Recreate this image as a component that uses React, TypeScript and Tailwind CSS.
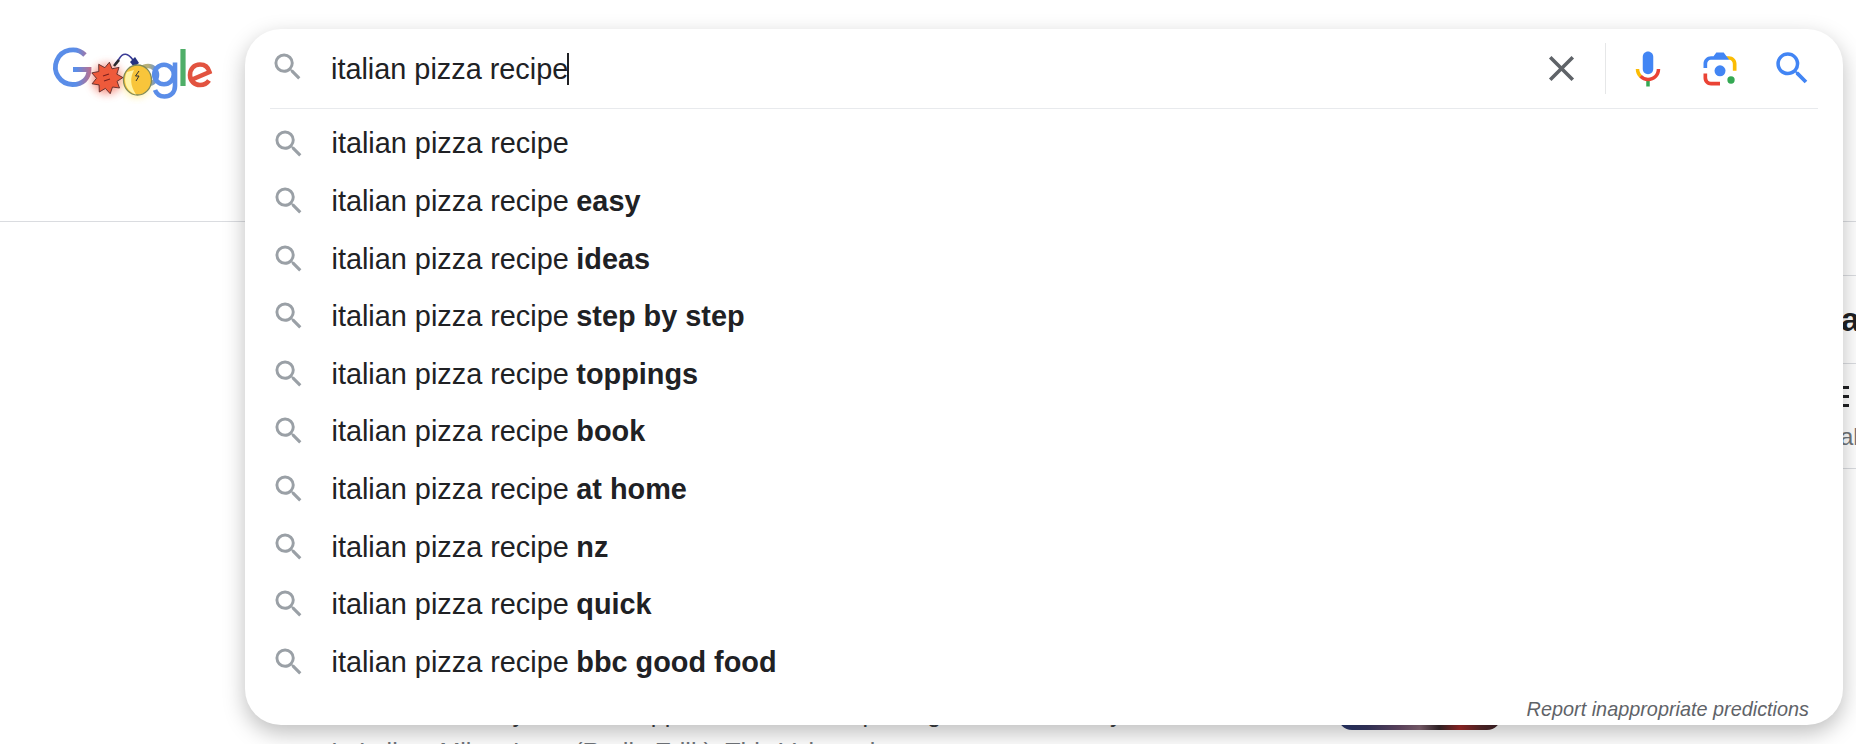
const SEARCH = "M15.5 14h-.79l-.28-.27A6.471 6.471 0 0 0 16 9.5 6.5 6.5 0 1 0 9.5 16c1.61 0 3.09-.59 4.23-1.57l.27.28v.79l5 4.99L20.49 19l-4.99-5zm-6 0C7.01 14 5 11.99 5 9.5S7.01 5 9.5 5 14 7.01 14 9.5 11.99 14 9.5 14z";

const suggestions = ["", "easy", "ideas", "step by step", "toppings", "book", "at home", "nz", "quick", "bbc good food"];

function starPoints(cx: number, cy: number, outer: number, inner: number, n: number) {
  const pts: string[] = [];
  for (let i = 0; i < n * 2; i++) {
    const r = i % 2 === 0 ? outer : inner;
    const a = (Math.PI * i) / n - Math.PI / 2 + 0.15;
    pts.push(`${(cx + r * Math.cos(a)).toFixed(1)},${(cy + r * Math.sin(a)).toFixed(1)}`);
  }
  return pts.join(" ");
}

function Logo() {
  return (
    <svg width="176" height="64" viewBox="44 40 176 64" className="block">
      <defs>
        <filter id="soft" x="-10%" y="-10%" width="120%" height="120%">
          <feGaussianBlur stdDeviation="0.7" />
        </filter>
        <filter id="glow" x="-60%" y="-60%" width="220%" height="220%">
          <feGaussianBlur stdDeviation="4" />
        </filter>
        <linearGradient id="gfade" gradientUnits="userSpaceOnUse" x1="76" y1="0" x2="94" y2="0">
          <stop offset="0" stopColor="#5a8de8" />
          <stop offset="1" stopColor="#d0687a" />
        </linearGradient>
        <linearGradient id="ofade" gradientUnits="userSpaceOnUse" x1="148" y1="0" x2="158" y2="0">
          <stop offset="0" stopColor="#b8b078" />
          <stop offset="1" stopColor="#5a8de8" />
        </linearGradient>
      </defs>
      <circle cx="107" cy="79" r="15" fill="#f26a55" opacity="0.7" filter="url(#glow)" />
      <circle cx="137" cy="84" r="12" fill="#ffe14d" opacity="0.7" filter="url(#glow)" />
      <g filter="url(#soft)" fill="none">
        <path d="M85 55 A17.3 17.3 0 1 0 72.5 84.5 C83 84.5 89 78 89 69.5 L73 69.5" stroke="url(#gfade)" strokeWidth="4.8" />
        <circle cx="148" cy="75" r="9" stroke="url(#ofade)" strokeWidth="4.5" />
        <circle cx="164" cy="74.5" r="9.8" stroke="#5a8de8" strokeWidth="4.6" />
        <path d="M175 62.5 V86 C175 93 170 96.5 164.5 96.5 C160 96.5 156.5 94 155 90" stroke="#5a8de8" strokeWidth="4.6" />
        <path d="M183 49 V86" stroke="#4fae68" strokeWidth="5.2" />
        <path d="M191 80 L209.5 72 C208 66.5 204 64.5 200 64.5 C194 64.5 190 69 190 75 C190 81 194.5 85 200 85 C204 85 207 83.5 209 80.5" stroke="#e2533f" strokeWidth="4.6" />
        <polygon points={starPoints(107, 78, 16, 10.5, 9)} fill="#ee5a3a" stroke="#5a2a2a" strokeWidth="0.9" />
        <path d="M103 76 l6 -2 M104 81 l6 -2" stroke="#7a1f1f" strokeWidth="1.1" />
        <path d="M115 64 L119 59 C123 52 128 53 133 60" stroke="#3a3b96" strokeWidth="1.6" />
        <path d="M114 66 L119 60" stroke="#2b2b2b" strokeWidth="2.6" />
        <path d="M130 62 L135 57 L139 63 L134 67 Z" fill="#25307f" />
        <ellipse cx="137.5" cy="80" rx="14" ry="15" fill="#f8c53a" stroke="#7f8a5a" strokeWidth="1.3" />
        <path d="M127 72 C123 79 125 91 136 94.5 C130 85 130 78 134 70 Z" fill="#fff3a6" />
        <path d="M139 71 l-3.5 5 l3.5 0 l-3 5" stroke="#333" strokeWidth="1" />
      </g>
    </svg>
  );
}

function Row({ bold }: { bold: string }) {
  return (
    <li className="flex h-[57.6px] items-center pl-[25.5px]">
      <svg width="35.6" height="35.6" viewBox="0 0 24 24" fill="#9aa0a6" className="shrink-0">
        <path d={SEARCH} />
      </svg>
      <span className="ml-[25.4px] pt-[1px] text-[28.85px] leading-none text-[#202124]">
        italian pizza recipe{bold ? " " : ""}
        {bold ? <b className="-ml-[0.5px] font-bold">{bold}</b> : null}
      </span>
    </li>
  );
}

export default function App() {
  return (
    <div className="relative h-[744px] w-full overflow-hidden bg-white font-['Liberation_Sans',Arial,sans-serif]">
      <header className="h-[222px] border-b border-[#dadce0] pl-[44px] pt-[40px]">
        <Logo />
      </header>

      <main className="flex h-[522px]">
        <div className="min-w-0 flex-1 pl-[331px] pt-[476px] text-[25px] leading-[30px]">
          <p className="flex whitespace-nowrap text-[#3c4043]">
            <span className="ml-[130px]">Every</span>
            <span className="ml-[112px]">appeared</span>
            <span className="ml-[99px]">top</span>
            <span className="ml-[5px]">using</span>
            <span className="ml-[141px]">day</span>
          </p>
          <p className="mt-[9px] whitespace-nowrap text-[#70757a]">In Italian: Milan, Luca (Radio Erlik). This Volume is</p>
        </div>
        <div className="mr-[255px] h-[508px] w-[163px] rounded-b-[14px] bg-[linear-gradient(90deg,#26386f_0%,#3a3a66_18%,#6d4f6e_38%,#8a6a7a_50%,#38282c_62%,#a32a2a_75%,#5a2a2c_88%,#3a2228_100%)]" />
        <aside className="w-[100px] shrink-0 text-[#202124]">
          <div className="h-[54px] border-b border-[#dadce0]" />
          <div className="flex h-[88px] items-center border-b border-[#dadce0] pl-[85px] text-[34px] font-bold leading-none">
            <span className="-mt-[2px]">a</span>
          </div>
          <div className="h-[105px] border-b border-[#dadce0] pl-[87px] pt-[22px]">
            <div className="h-[2.5px] w-[6px] bg-[#202124]" />
            <div className="mt-[6.5px] h-[2.5px] w-[6px] bg-[#202124]" />
            <div className="mt-[6.5px] h-[2.5px] w-[6px] bg-[#202124]" />
            <p className="mt-[18px] -ml-[3px] text-[24px] leading-none text-[#70757a]">al</p>
          </div>
        </aside>
      </main>

      <section className="absolute left-[245px] top-[29px] flex h-[696px] w-[1598px] flex-col rounded-[36px] bg-white shadow-[0_8px_22px_rgba(0,0,0,0.26)]">
        <div className="mx-[25px] flex h-[80px] shrink-0 items-center border-b-[1.5px] border-[#e8eaed]">
          <svg width="35.6" height="35.6" viewBox="0 0 24 24" fill="#9aa0a6" className="-mt-[4px] shrink-0">
            <path d={SEARCH} />
          </svg>
          <span className="ml-[25.4px] pt-[2px] text-[28.85px] leading-none text-[#202124]">italian pizza recipe</span>
          <span className="-ml-[1px] h-[32px] w-[1.3px] bg-[#202124]" />
          <div className="ml-auto flex items-center pr-[5px]">
            <svg width="43" height="43" viewBox="0 0 24 24" fill="#5f6368">
              <path d="M19 6.41L17.59 5 12 10.59 6.41 5 5 6.41 10.59 12 5 17.59 6.41 19 12 13.41 17.59 19 19 17.59 13.41 12z" />
            </svg>
            <span className="ml-[22px] h-[51px] w-[1.5px] bg-[#e6e7e8]" />
            <svg width="42" height="42" viewBox="0 0 24 24" className="ml-[21px]">
              <path fill="#4285f4" d="m12 15c1.66 0 3-1.31 3-2.97v-7.02c0-1.66-1.34-3.01-3-3.01s-3 1.34-3 3.01v7.02c0 1.66 1.34 2.97 3 2.97z" />
              <path fill="#34a853" d="m11 18.08h2v3.92h-2z" />
              <path fill="#fbbc05" d="m7.05 16.87c-1.27-1.33-2.05-2.83-2.05-4.87h2c0 1.45 0.56 2.42 1.47 3.38v0.32l-1.15 1.18z" />
              <path fill="#ea4335" d="m12 16.93a4.97 5.25 0 0 1 -3.54 -1.55l-1.41 1.49c1.26 1.34 3.02 2.13 4.95 2.13 3.87 0 6.99-2.92 6.99-6.99h-2c0 2.95-2.05 4.92-4.99 4.92z" />
            </svg>
            <svg width="44" height="44" viewBox="0 0 192 192" className="ml-[28.5px]">
              <circle fill="#34a853" cx="144.07" cy="144" r="16" />
              <circle fill="#4285f4" cx="96.07" cy="104" r="24" />
              <path fill="#ea4335" d="M24,135.2c0,18.11,14.69,32.8,32.8,32.8H96v-16l-40.1-0.1c-8.8,0-15.9-8.19-15.9-17.9v-18H24V135.2z" />
              <path fill="#fbbc04" d="M168,72.8c0-18.11-14.69-32.8-32.8-32.8H116l20,16c8.8,0,16,8.29,16,18v30h16V72.8z" />
              <path fill="#4285f4" d="M112,24l-32,0L68,40H56.8C38.69,40,24,54.69,24,72.8V92h16V74c0-9.71,7.2-18,16-18h80L112,24z" />
            </svg>
            <svg width="42.5" height="42.5" viewBox="0 0 24 24" fill="#4285f4" className="ml-[29px]">
              <path d={SEARCH} />
            </svg>
          </div>
        </div>
        <ul className="mt-[5.5px] shrink-0">
          {suggestions.map((b) => (
            <Row key={b || "base"} bold={b} />
          ))}
        </ul>
        <p className="mt-auto pb-[4px] pr-[34px] text-right text-[19.85px] italic leading-[24px] text-[#5f6368]">
          Report inappropriate predictions
        </p>
      </section>
    </div>
  );
}
